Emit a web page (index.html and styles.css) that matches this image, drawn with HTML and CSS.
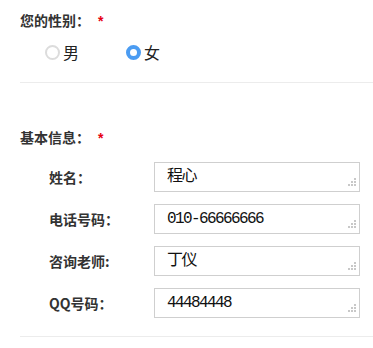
FILE: index.html
```html
<!DOCTYPE html>
<html lang="zh-CN">
<head>
    <meta charset="UTF-8">
    <meta name="viewport" content="width=device-width, initial-scale=1.0">
    <title>报名信息</title>
    <link rel="stylesheet" href="styles.css">
</head>
<body>
    <div class="form">
        <div class="section section-sex">
            <div class="section-title">您的性别：<span class="req">*</span></div>
            <div class="radios">
                <label class="radio"><input type="radio" name="sex"><span>男</span></label>
                <label class="radio"><input type="radio" name="sex" checked><span>女</span></label>
            </div>
        </div>
        <div class="section section-info">
            <div class="section-title">基本信息：<span class="req">*</span></div>
            <div class="fields">
                <div class="field">
                    <label class="field-label">姓名：</label>
                    <span class="input-wrap"><textarea class="field-input" rows="1">程心</textarea></span>
                </div>
                <div class="field">
                    <label class="field-label">电话号码：</label>
                    <span class="input-wrap"><textarea class="field-input" rows="1">010-66666666</textarea></span>
                </div>
                <div class="field">
                    <label class="field-label">咨询老师:</label>
                    <span class="input-wrap"><textarea class="field-input" rows="1">丁仪</textarea></span>
                </div>
                <div class="field">
                    <label class="field-label">QQ号码：</label>
                    <span class="input-wrap"><textarea class="field-input" rows="1">44484448</textarea></span>
                </div>
            </div>
        </div>
    </div>
</body>
</html>
```

FILE: styles.css
```css
body {
    margin: 0;
    background: #fff;
    color: #333;
    font-family: "Noto Sans CJK SC", sans-serif;
}

.form {
    margin-left: 20px;
}

.section {
    border-bottom: 1px solid #ececec;
}

.section-sex {
    padding: 10px 0 20px;
}

.section-info {
    padding: 44px 0 18px;
}

.section-title {
    font-size: 14px;
    font-weight: bold;
    line-height: 20px;
    height: 20px;
}

.req {
    color: #e60012;
    margin-left: 8px;
    font-weight: bold;
    font-family: "Liberation Sans", sans-serif;
}

.radios {
    display: flex;
    margin-top: 12px;
    padding-left: 25px;
    height: 20px;
    align-items: center;
}

.radio {
    display: flex;
    align-items: center;
    width: 81px;
    font-size: 16px;
    color: #222;
    line-height: 20px;
}

.radio input {
    appearance: none;
    -webkit-appearance: none;
    margin: 0 3px 0 0;
    width: 15px;
    height: 15px;
    border: 2px solid #dcdcdc;
    border-radius: 50%;
    background: #fff;
    box-sizing: border-box;
}

.radio input:checked {
    border: 4px solid #4b9cf2;
    background: #fff;
}

.fields {
    display: flex;
    flex-direction: column;
    gap: 12px;
    margin-top: 15px;
}

.field {
    display: flex;
    align-items: center;
    height: 30px;
}

.field-label {
    width: 105px;
    padding-left: 29px;
    font-size: 14px;
    font-weight: bold;
    color: #333;
}

.input-wrap {
    position: relative;
    display: block;
    height: 30px;
}

/* dotted resize grip, bottom right */
.input-wrap::after {
    content: "";
    position: absolute;
    right: 4px;
    bottom: 6px;
    width: 2px;
    height: 2px;
    background: #c8c8c8;
    box-shadow:
        0 -3px 0 #c8c8c8,
        0 -6px 0 #c8c8c8,
        -3px 0 0 #c8c8c8,
        -3px -3px 0 #c8c8c8,
        -6px 0 0 #c8c8c8;
}

.field-input {
    display: block;
    box-sizing: border-box;
    width: 206px;
    height: 30px;
    margin: 0;
    padding: 4px 12px;
    border: 1px solid #cfcfcf;
    border-radius: 0;
    font-family: "Liberation Mono", "Noto Sans CJK SC", monospace;
    font-size: 16px;
    letter-spacing: -1.6px;
    line-height: 20px;
    color: #111;
    overflow: hidden;
    outline: none;
    resize: none;
}
```
